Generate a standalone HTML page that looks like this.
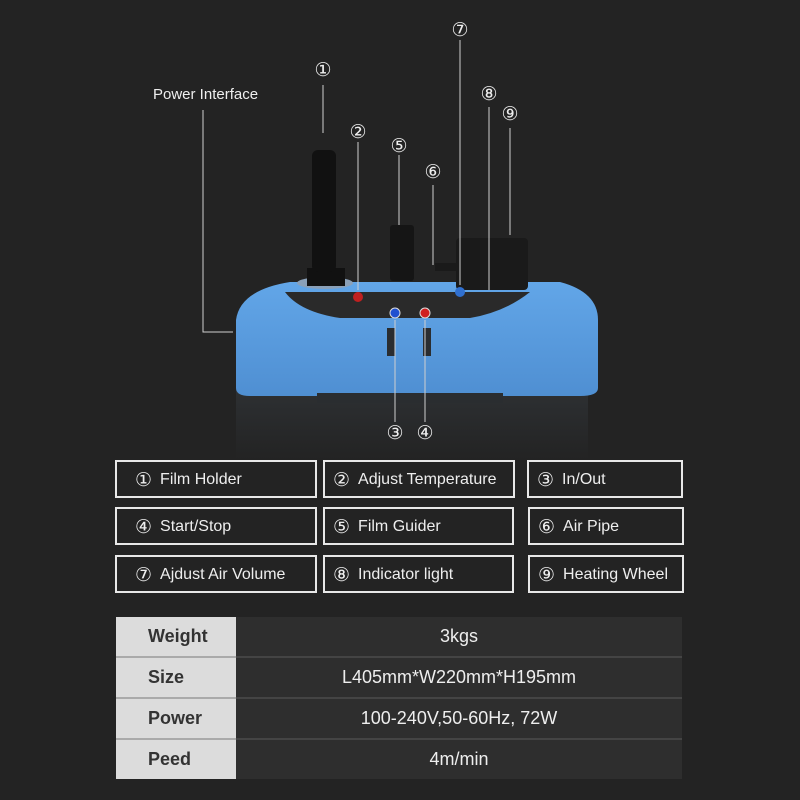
<!DOCTYPE html>
<html><head><meta charset="utf-8"><style>
body{margin:0;background:#232323;width:800px;height:800px;overflow:hidden;font-family:"Liberation Sans","DejaVu Sans",sans-serif;position:relative}
.b{position:absolute;border:2px solid #e8e8e8;box-sizing:border-box;color:#eee;font-size:16px;display:flex;align-items:center;padding-left:18px;padding-top:2px;white-space:nowrap}
.b span{font-family:"DejaVu Sans",sans-serif;font-size:19px;margin-right:8px}
table{position:absolute;left:116px;top:617px;width:566px;border-collapse:collapse}
td{height:39px;padding:0;font-size:18px;border-bottom:2px solid #444}
td.l{background:#dcdcdc;color:#333;font-weight:bold;width:88px;padding-left:32px;border-bottom:2px solid #aaa}
td.v{background:#2e2e2e;color:#eee;text-align:center}
</style></head><body>
<svg width="800" height="460" style="position:absolute;left:0;top:0" font-family="DejaVu Sans,sans-serif">
<defs>
<linearGradient id="bl" x1="0" y1="0" x2="0" y2="1"><stop offset="0" stop-color="#62a6e8"/><stop offset="1" stop-color="#4f8fd2"/></linearGradient>
<linearGradient id="dk" x1="0" y1="0" x2="0" y2="1"><stop offset="0" stop-color="#2e3134"/><stop offset="1" stop-color="#232323"/></linearGradient>
</defs>
<rect x="236" y="385" width="352" height="75" fill="url(#dk)"/>
<path d="M236 320 Q240 290 290 282 L560 282 Q598 292 598 320 L598 388 Q598 396 580 396 L250 396 Q236 396 236 388Z" fill="url(#bl)"/>
<rect x="317" y="393" width="186" height="10" fill="#2a2d30"/>
<path d="M285 292 L530 292 Q505 312 470 318 L340 318 Q300 312 285 292Z" fill="#2a2a2a"/>
<rect x="387" y="328" width="8" height="28" fill="#2a2d30"/>
<rect x="423" y="328" width="8" height="28" fill="#2a2d30"/>
<ellipse cx="325" cy="283" rx="28" ry="6" fill="#8aa0b8"/>
<rect x="307" y="268" width="38" height="18" fill="#111"/>
<rect x="312" y="150" width="24" height="122" rx="6" fill="#111"/>
<rect x="390" y="225" width="24" height="56" rx="3" fill="#151515"/>
<rect x="456" y="238" width="72" height="52" rx="4" fill="#1a1a1a"/>
<rect x="435" y="263" width="22" height="8" fill="#1a1a1a"/>
<circle cx="358" cy="297" r="5" fill="#c02020"/>
<circle cx="460" cy="292" r="5" fill="#3070d0"/>
<circle cx="395" cy="313" r="5" fill="#2050d0" stroke="#ddd"/>
<circle cx="425" cy="313" r="5" fill="#d02020" stroke="#ddd"/>
<g stroke="#cfcfcf" stroke-width="1" fill="none">
<path d="M203 110 V332 H233"/>
<path d="M323 85 V133"/><path d="M358 142 V290"/><path d="M399 155 V225"/><path d="M433 185 V265"/>
<path d="M460 40 V285"/><path d="M489 107 V290"/><path d="M510 128 V235"/>
<path d="M395 320 V422"/><path d="M425 320 V422"/>
</g>
<g fill="#eee" font-size="19" text-anchor="middle">
<text x="323" y="76">①</text><text x="358" y="138">②</text><text x="399" y="152">⑤</text><text x="433" y="178">⑥</text>
<text x="460" y="36">⑦</text><text x="489" y="100">⑧</text><text x="510" y="120">⑨</text>
<text x="395" y="439">③</text><text x="425" y="439">④</text>
</g>
<text x="153" y="99" fill="#eee" font-size="15" font-family="Liberation Sans,sans-serif">Power Interface</text>
</svg>
<div class="b" style="left:115px;top:460px;width:202px;height:38px"><span>①</span>Film Holder</div>
<div class="b" style="left:323px;top:460px;width:192px;height:38px;padding-left:8px"><span>②</span>Adjust Temperature</div>
<div class="b" style="left:527px;top:460px;width:156px;height:38px;padding-left:8px"><span>③</span>In/Out</div>
<div class="b" style="left:115px;top:507px;width:202px;height:38px"><span>④</span>Start/Stop</div>
<div class="b" style="left:323px;top:507px;width:191px;height:38px;padding-left:8px"><span>⑤</span>Film Guider</div>
<div class="b" style="left:528px;top:507px;width:156px;height:38px;padding-left:8px"><span>⑥</span>Air Pipe</div>
<div class="b" style="left:115px;top:555px;width:202px;height:38px"><span>⑦</span>Ajdust Air Volume</div>
<div class="b" style="left:323px;top:555px;width:191px;height:38px;padding-left:8px"><span>⑧</span>Indicator light</div>
<div class="b" style="left:528px;top:555px;width:156px;height:38px;padding-left:8px"><span>⑨</span>Heating Wheel</div>
<table>
<tr><td class="l">Weight</td><td class="v">3kgs</td></tr>
<tr><td class="l">Size</td><td class="v">L405mm*W220mm*H195mm</td></tr>
<tr><td class="l">Power</td><td class="v">100-240V,50-60Hz, 72W</td></tr>
<tr><td class="l" style="border:0">Peed</td><td class="v" style="border:0">4m/min</td></tr>
</table>
</body></html>
